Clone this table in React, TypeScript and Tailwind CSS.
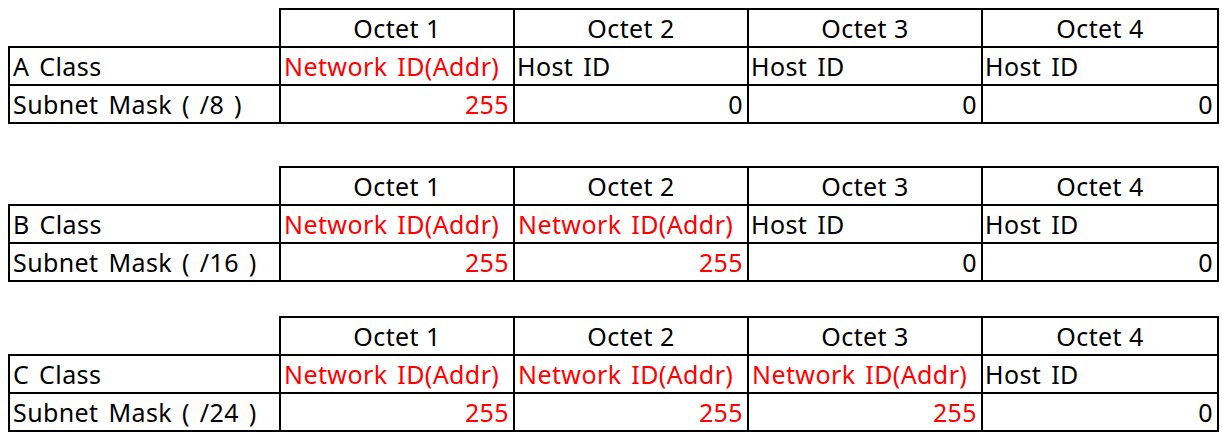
type ClassTable = {
  name: string
  prefix: string
  networkOctets: number
}

const tables: ClassTable[] = [
  { name: "A Class", prefix: "/8", networkOctets: 1 },
  { name: "B Class", prefix: "/16", networkOctets: 2 },
  { name: "C Class", prefix: "/24", networkOctets: 3 },
]

const octets = [1, 2, 3, 4]

function SubnetTable({ table }: { table: ClassTable }) {
  return (
    <table className="border-collapse table-fixed w-[1209px] text-[25px] leading-none tracking-[0.4px] [word-spacing:3px] text-black">
      <colgroup>
        <col className="w-[271px]" />
        <col className="w-[234px]" />
        <col className="w-[234px]" />
        <col className="w-[234px]" />
        <col className="w-[236px]" />
      </colgroup>
      <tbody>
        <tr className="h-[38px]">
          <td className="p-0" />
          {octets.map((o) => (
            <td key={o} className="border-2 border-black text-center font-normal p-0 [word-spacing:0px]">
              Octet {o}
            </td>
          ))}
        </tr>
        <tr className="h-[38px]">
          <td className="border-2 border-black px-[3px] whitespace-nowrap">{table.name}</td>
          {octets.map((o) => (
            <td
              key={o}
              className={
                o <= table.networkOctets
                  ? "border-2 border-black px-[3px] text-left whitespace-nowrap text-[#ff0000]"
                  : "border-2 border-black px-[2px] text-left whitespace-nowrap"
              }
            >
              {o <= table.networkOctets ? "Network ID(Addr)" : "Host ID"}
            </td>
          ))}
        </tr>
        <tr className="h-[38px]">
          <td className="border-2 border-black px-[3px] whitespace-nowrap">
            Subnet Mask ( {table.prefix} )
          </td>
          {octets.map((o) => (
            <td
              key={o}
              className={
                o <= table.networkOctets
                  ? "border-2 border-black px-[4px] text-right text-[#ff0000]"
                  : "border-2 border-black px-[4px] text-right"
              }
            >
              {o <= table.networkOctets ? "255" : "0"}
            </td>
          ))}
        </tr>
      </tbody>
    </table>
  )
}

export default function App() {
  return (
    <div className="w-[1222px] h-[438px] bg-white pl-2 pt-2 font-['Noto_Sans','Open_Sans',sans-serif]">
      <div className="mb-[42px]">
        <SubnetTable table={tables[0]} />
      </div>
      <div className="mb-[34px]">
        <SubnetTable table={tables[1]} />
      </div>
      <SubnetTable table={tables[2]} />
    </div>
  )
}
